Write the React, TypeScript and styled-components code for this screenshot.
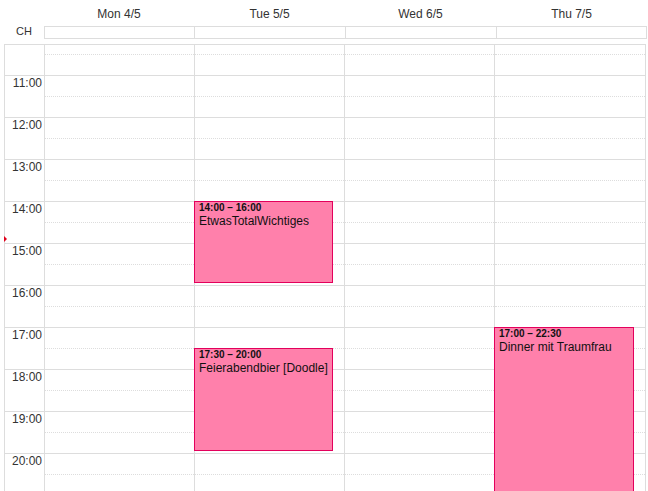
import React, { useLayoutEffect, useRef } from 'react'
import styled, { createGlobalStyle } from 'styled-components'

const SLOT_HEIGHT = 21
const MIN_HOUR = 10
const SCROLL_OFFSET = 12
const NOW = { hours: 14, minutes: 56 }

interface CalendarEvent {
    day: number
    start: string
    end: string
    title: string
}

const days = ['Mon 4/5', 'Tue 5/5', 'Wed 6/5', 'Thu 7/5']

const events: CalendarEvent[] = [
    { day: 1, start: '14:00', end: '16:00', title: 'EtwasTotalWichtiges' },
    { day: 1, start: '17:30', end: '20:00', title: 'Feierabendbier [Doodle]' },
    { day: 3, start: '17:00', end: '22:30', title: 'Dinner mit Traumfrau' },
]

const toMinutes = (time: string) => {
    const [h, m] = time.split(':').map(Number)
    return h * 60 + m - MIN_HOUR * 60
}

const minutesToPx = (minutes: number) => (minutes / 30) * SLOT_HEIGHT

const hours = Array.from({ length: 24 - MIN_HOUR }, (_, i) => i + MIN_HOUR)
const slots = Array.from({ length: hours.length * 2 }, (_, i) => i)

export default function App() {
    const scrollerRef = useRef<HTMLDivElement>(null)

    useLayoutEffect(() => {
        if (scrollerRef.current) {
            scrollerRef.current.scrollTop = SCROLL_OFFSET
        }
    }, [])

    return (
        <>
            <GlobalStyle />
            <CalendarStyled>
                <DayNamesRowStyled>
                    <div />
                    {days.map((day) => (
                        <DayNameStyled key={day}>{day}</DayNameStyled>
                    ))}
                </DayNamesRowStyled>
                <AllDayRowStyled>
                    <AllDayAxisStyled>CH</AllDayAxisStyled>
                    {days.map((day, i) => (
                        <AllDayCellStyled key={day} $last={i === days.length - 1} />
                    ))}
                </AllDayRowStyled>
                <BodyStyled>
                    <ScrollerStyled ref={scrollerRef}>
                        <TimeGridStyled>
                            <AxisColumnStyled>
                                <NowArrowStyled
                                    style={{
                                        top:
                                            minutesToPx(
                                                (NOW.hours - MIN_HOUR) * 60 + NOW.minutes
                                            ) - 4,
                                    }}
                                />
                                {hours.map((h) => (
                                    <HourLabelStyled key={h}>{`${h}:00`}</HourLabelStyled>
                                ))}
                            </AxisColumnStyled>
                            {days.map((day, i) => (
                                <DayColumnStyled key={day} $last={i === days.length - 1}>
                                    {slots.map((s) => (
                                        <SlotStyled key={s} $half={s % 2 === 1} />
                                    ))}
                                    {events
                                        .filter((ev) => ev.day === i)
                                        .map((ev) => {
                                            const start = toMinutes(ev.start)
                                            const end = toMinutes(ev.end)
                                            return (
                                                <EventStyled
                                                    key={ev.title}
                                                    style={{
                                                        top: minutesToPx(start),
                                                        height: minutesToPx(end - start) - 2,
                                                    }}
                                                >
                                                    <EventTimeStyled>
                                                        {ev.start} – {ev.end}
                                                    </EventTimeStyled>
                                                    <EventTitleStyled>{ev.title}</EventTitleStyled>
                                                </EventStyled>
                                            )
                                        })}
                                </DayColumnStyled>
                            ))}
                        </TimeGridStyled>
                    </ScrollerStyled>
                </BodyStyled>
            </CalendarStyled>
        </>
    )
}

const GlobalStyle = createGlobalStyle`
    html, body {
        margin: 0;
        padding: 0;
        background: #fff;
        overflow: hidden;
    }

    body {
        font-family: "Liberation Sans", Arial, sans-serif;
        color: #333;
    }
`

const CalendarStyled = styled.div`
    width: 648px;
    height: 491px;
    padding-left: 4px;
    box-sizing: border-box;
    overflow: hidden;
`

const DayNamesRowStyled = styled.div`
    display: grid;
    grid-template-columns: 40px 150px 151px 151px 1fr;
    width: 643px;
    height: 26px;
`

const DayNameStyled = styled.div`
    text-align: center;
    font-size: 12px;
    line-height: 14px;
    padding-top: 7px;
    color: #333;
`

const AllDayRowStyled = styled.div`
    display: grid;
    grid-template-columns: 40px 150px 151px 151px 1fr;
    width: 643px;
    height: 13px;
    margin-bottom: 5px;
`

const AllDayAxisStyled = styled.div`
    text-align: center;
    font-size: 11px;
    line-height: 11px;
    color: #333;
`

const AllDayCellStyled = styled.div<{ $last?: boolean }>`
    box-sizing: border-box;
    height: 13px;
    border: 1px solid #ddd;
    border-right: ${(p) => (p.$last ? '1px solid #ddd' : 'none')};
`

const BodyStyled = styled.div`
    width: 642px;
    height: 447px;
    box-sizing: border-box;
    border-top: 1px solid #ddd;
    overflow: hidden;
`

const ScrollerStyled = styled.div`
    height: 446px;
    overflow: hidden;
`

const TimeGridStyled = styled.div`
    display: grid;
    grid-template-columns: 40px 150px 150px 150px 1fr;
`

const AxisColumnStyled = styled.div`
    position: relative;
    box-sizing: border-box;
    border-left: 1px solid #ddd;
`

const HourLabelStyled = styled.div`
    box-sizing: border-box;
    height: ${SLOT_HEIGHT * 2}px;
    border-top: 1px solid #ddd;
    padding-right: 2px;
    text-align: right;
    font-size: 12px;
    line-height: 14px;
    color: #333;
    white-space: nowrap;
`

const NowArrowStyled = styled.div`
    position: absolute;
    left: -1px;
    width: 0;
    height: 0;
    border-style: solid;
    border-width: 3.5px 0 3.5px 3.5px;
    border-color: transparent transparent transparent #e0001b;
`

const DayColumnStyled = styled.div<{ $last?: boolean }>`
    position: relative;
    box-sizing: border-box;
    border-left: 1px solid #ddd;
    border-right: ${(p) => (p.$last ? '1px solid #ddd' : 'none')};
`

const SlotStyled = styled.div<{ $half?: boolean }>`
    box-sizing: border-box;
    height: ${SLOT_HEIGHT}px;
    border-top: 1px ${(p) => (p.$half ? 'dotted' : 'solid')} #ddd;
`

const EventStyled = styled.div`
    position: absolute;
    left: -1px;
    right: 11px;
    border: 1px solid #e3005c;
    background: #ff80ab;
    color: #111;
    padding: 0 4px;
    overflow: hidden;
    box-sizing: border-box;
`

const EventTimeStyled = styled.div`
    font-size: 10px;
    font-weight: 700;
    line-height: 12px;
    white-space: nowrap;
`

const EventTitleStyled = styled.div`
    font-size: 12px;
    line-height: 14px;
    white-space: nowrap;
`
